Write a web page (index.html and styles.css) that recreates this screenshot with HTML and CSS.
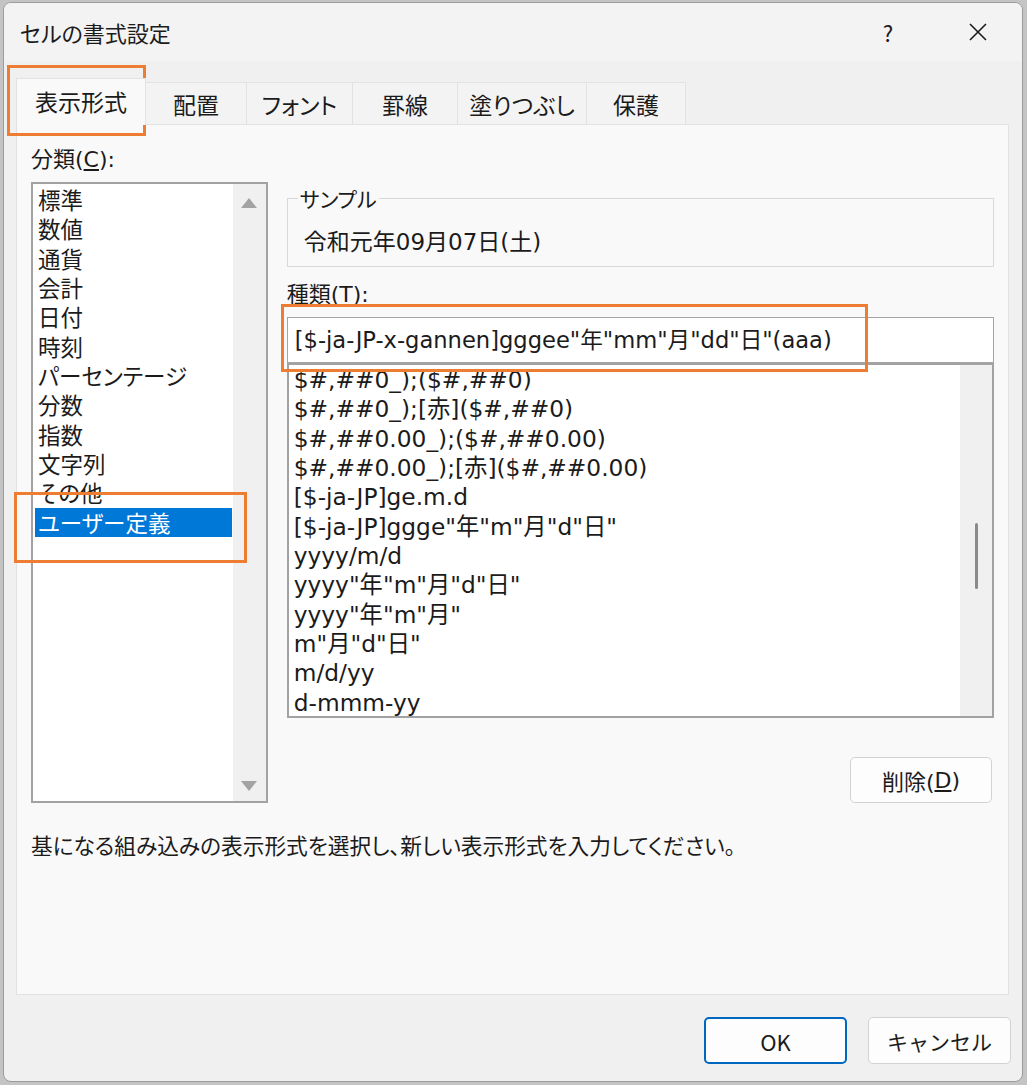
FILE: index.html
```html
<!DOCTYPE html>
<html lang="ja">
<head>
<meta charset="utf-8">
<title>セルの書式設定</title>
<link rel="stylesheet" href="styles.css">
</head>
<body>
<div class="dialog">
  <div class="titlebar">
    <div class="title">セルの書式設定</div>
    <div class="help">?</div>
    <div class="close">
      <svg width="20" height="20" viewBox="0 0 20 20"><path d="M2 2 L18 18 M18 2 L2 18" stroke="#1b1b1b" stroke-width="1.6" fill="none"/></svg>
    </div>
  </div>
  <div class="tabs">
    <div class="tab active t-format">表示形式</div>
    <div class="tab t-align">配置</div>
    <div class="tab t-font">フォント</div>
    <div class="tab t-border">罫線</div>
    <div class="tab t-fill">塗りつぶし</div>
    <div class="tab t-protect last">保護</div>
  </div>
  <div class="panel">
    <div class="panel-row">
      <div class="left">
        <div class="label">分類(<u>C</u>):</div>
        <div class="catlist">
          <ul class="catitems">
            <li>標準</li>
            <li>数値</li>
            <li>通貨</li>
            <li>会計</li>
            <li>日付</li>
            <li>時刻</li>
            <li>パーセンテージ</li>
            <li>分数</li>
            <li>指数</li>
            <li>文字列</li>
            <li>その他</li>
            <li class="sel">ユーザー定義</li>
          </ul>
          <div class="vscroll">
            <span class="arrow-up"></span>
            <span class="arrow-down"></span>
          </div>
        </div>
      </div>
      <div class="right">
        <fieldset class="sample">
          <legend>サンプル</legend>
          <div class="sample-value">令和元年09月07日(土)</div>
        </fieldset>
        <div class="label kind">種類(T):</div>
        <div class="input">[$-ja-JP-x-gannen]gggee"年"mm"月"dd"日"(aaa)</div>
        <div class="fmtlist">
          <ul class="fmtitems">
            <li>$#,##0_);($#,##0)</li>
            <li>$#,##0_);[赤]($#,##0)</li>
            <li>$#,##0.00_);($#,##0.00)</li>
            <li>$#,##0.00_);[赤]($#,##0.00)</li>
            <li>[$-ja-JP]ge.m.d</li>
            <li>[$-ja-JP]ggge"年"m"月"d"日"</li>
            <li>yyyy/m/d</li>
            <li>yyyy"年"m"月"d"日"</li>
            <li>yyyy"年"m"月"</li>
            <li>m"月"d"日"</li>
            <li>m/d/yy</li>
            <li>d-mmm-yy</li>
          </ul>
          <div class="fmtscroll"><span class="thumb"></span></div>
        </div>
        <div class="btn delete">削除(<u>D</u>)</div>
      </div>
    </div>
    <div class="desc">基になる組み込みの表示形式を選択し、新しい表示形式を入力してください。</div>
  </div>
  <div class="footer">
    <div class="btn ok">OK</div>
    <div class="btn cancel">キャンセル</div>
  </div>
</div>
<div class="mark mark-tab"></div>
<div class="mark mark-input"></div>
<div class="mark mark-user"></div>
</body>
</html>
```
FILE: styles.css
```css
* { box-sizing: border-box; }
html, body { margin: 0; }
body {
  width: 1027px;
  height: 1085px;
  padding: 2px 4px 3px 3px;
  background: #c4c4c4;
  position: relative;
  overflow: hidden;
  font-family: "Noto Sans CJK JP", "Noto Sans", sans-serif;
  font-feature-settings: "palt";
  color: #1b1b1b;
}
.dialog {
  width: 1020px;
  height: 1080px;
  border: 1px solid #9c9c9c;
  border-radius: 8px;
  background: #f0f0f0;
  overflow: hidden;
  display: flex;
  flex-direction: column;
}
.titlebar {
  height: 58px;
  flex: none;
  display: flex;
  align-items: center;
  padding-left: 16px;
  background: #f3f3f3;
  font-size: 22px;
}
.title { flex: 1; }
.help { width: 50px; text-align: center; margin-right: 30px; font-size: 22px; }
.close { width: 70px; margin-right: 9px; display: flex; justify-content: center; }

.tabs {
  flex: none;
  height: 63px;
  display: flex;
  align-items: flex-end;
  padding: 17px 0 0 12px;
}
.tab {
  height: 42px;
  display: flex;
  align-items: center;
  justify-content: center;
  font-size: 23px;
  background: #f3f3f3;
  border-top: 1px solid #e2e2e2;
  border-left: 1px solid #e2e2e2;
}
.tab.last { border-right: 1px solid #e2e2e2; }
.tab.active {
  height: 47px;
  margin-bottom: -1px;
  position: relative;
  z-index: 1;
  background: #f9f9f9;
  border-right: 1px solid #e2e2e2;
  padding-bottom: 2px;
}
.t-format { width: 130px; }
.t-align { width: 100px; border-left: none; }
.t-font { width: 106px; }
.t-border { width: 105px; }
.t-fill { width: 129px; }
.t-protect { width: 100px; }

.panel {
  flex: none;
  height: 871px;
  margin: 0 13px 0 12px;
  border: 1px solid #e2e2e2;
  background: #f9f9f9;
  padding: 20px 14px 0 14px;
}
.panel-row { display: flex; gap: 19px; }
.left { width: 237px; }
.label {
  font-size: 22px;
  line-height: 30px;
  height: 30px;
  font-family: "DejaVu Sans", "Noto Sans CJK JP", sans-serif;
}
.left .label { margin-bottom: 7px; }

.catlist {
  height: 621px;
  border: 2px solid #a2a2a2;
  background: #fff;
  display: flex;
}
.catitems {
  flex: 1;
  list-style: none;
  margin: 0;
  padding: 1px 0 0 0;
}
.catitems li {
  height: 29.33px;
  line-height: 29.33px;
  padding-left: 5px;
  margin-right: 1px;
  font-size: 22.5px;
  white-space: nowrap;
}
.catitems li.sel {
  background: #0078d7;
  color: #fff;
  margin-left: 2px;
  padding-left: 3px;
}
.vscroll {
  width: 33px;
  background: #f0f0f0;
  display: flex;
  flex-direction: column;
  justify-content: space-between;
  align-items: center;
  padding: 14px 0 10px 0;
}
.arrow-up {
  width: 0; height: 0;
  border-left: 8px solid transparent;
  border-right: 8px solid transparent;
  border-bottom: 10px solid #a3a3a3;
}
.arrow-down {
  width: 0; height: 0;
  border-left: 8px solid transparent;
  border-right: 8px solid transparent;
  border-top: 10px solid #a3a3a3;
}

.right {
  width: 708px;
  display: flex;
  flex-direction: column;
  padding-top: 42px;
}
.sample {
  margin: 0;
  border: 1px solid #d8d8d8;
  padding: 0 0 9px 10px;
}
.sample legend {
  padding: 0 2px;
  font-size: 21px;
  line-height: 22px;
}
.sample-value {
  margin-top: 18px;
  padding-left: 6px;
  line-height: 30px;
  font-size: 23px;
  font-family: "DejaVu Sans", "Noto Sans CJK JP", sans-serif;
}
.kind { margin-top: 13px; margin-bottom: 7px; }
.input {
  height: 46px;
  border: 1px solid #a5a5a5;
  background: #fff;
  padding-left: 7px;
  line-height: 44px;
  font-size: 22.6px;
  font-family: "DejaVu Sans", "Noto Sans CJK JP", sans-serif;
  white-space: nowrap;
}
.fmtlist {
  height: 355px;
  border: 2px solid #a2a2a2;
  background: #fff;
  display: flex;
}
.fmtitems {
  flex: 1;
  list-style: none;
  margin: 0;
  padding: 0 0 0 5px;
  overflow: hidden;
}
.fmtitems li {
  height: 29.33px;
  line-height: 29.33px;
  font-size: 23.3px;
  font-family: "DejaVu Sans", "Noto Sans CJK JP", sans-serif;
  white-space: nowrap;
}
.fmtscroll {
  width: 32px;
  background: #f0f0f0;
  display: flex;
  justify-content: center;
  align-items: flex-start;
}
.thumb {
  width: 3px;
  height: 66px;
  margin-top: 158px;
  background: #8a8a8a;
  border-radius: 2px;
}

.btn {
  display: flex;
  align-items: center;
  justify-content: center;
  background: #fdfdfd;
  border: 1px solid #d2d2d2;
  border-radius: 5px;
  font-size: 21px;
}
.delete {
  align-self: flex-end;
  margin-top: 39px;
  margin-right: 2px;
  width: 142px;
  height: 46px;
  font-size: 22px;
  font-family: "DejaVu Sans", "Noto Sans CJK JP", sans-serif;
}
.desc {
  margin-top: 27px;
  line-height: 30px;
  font-size: 21.7px;
}
.footer {
  flex: none;
  display: flex;
  justify-content: flex-end;
  gap: 21px;
  padding: 22px 11px 0 0;
}
.ok, .cancel { width: 143px; height: 47px; }
.ok { border: 2px solid #0067c0; font-size: 22px; }
.cancel { font-feature-settings: normal; }

.mark {
  position: absolute;
  border: 3px solid #ed7d31;
}
.mark-tab { left: 7px; top: 65px; width: 139px; height: 71px; }
.mark-input { left: 281px; top: 304px; width: 587px; height: 68px; }
.mark-user { left: 14px; top: 492px; width: 233px; height: 71px; }
```
